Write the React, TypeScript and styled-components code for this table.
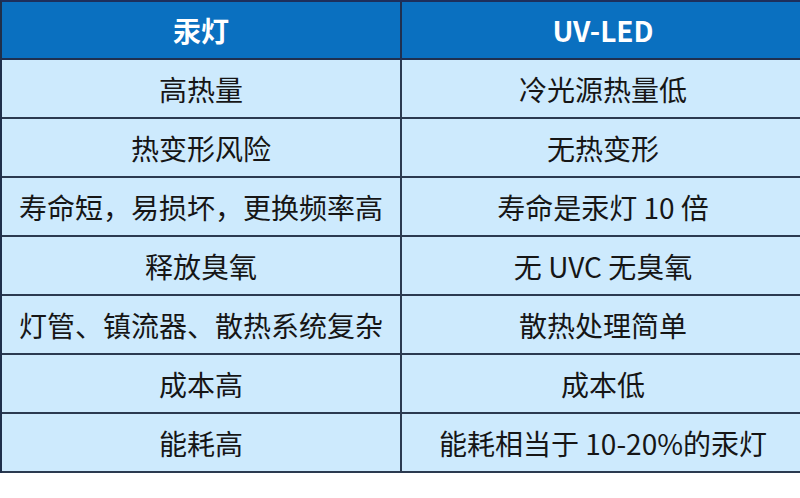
import { Fragment } from 'react';
import { createGlobalStyle, styled } from 'styled-components';

const rows = [
  ['高热量', '冷光源热量低'],
  ['热变形风险', '无热变形'],
  ['寿命短，易损坏，更换频率高', '寿命是汞灯 10 倍'],
  ['释放臭氧', '无 UVC 无臭氧'],
  ['灯管、镇流器、散热系统复杂', '散热处理简单'],
  ['成本高', '成本低'],
  ['能耗高', '能耗相当于 10-20%的汞灯'],
];

export default function App() {
  return (
    <>
      <GlobalStyle />
      <Page>
        <Table>
          <HeadCell $first>汞灯</HeadCell>
          <HeadCell>UV-LED</HeadCell>
          {rows.map(([left, right]) => (
            <Fragment key={left}>
              <Cell $first>{left}</Cell>
              <Cell>{right}</Cell>
            </Fragment>
          ))}
        </Table>
      </Page>
    </>
  );
}

const GlobalStyle = createGlobalStyle`
  html, body {
    margin: 0;
    padding: 0;
    background: #ffffff;
    overflow: hidden;
  }
`;

const Page = styled.div`
  width: 800px;
  height: 498px;
  background: #ffffff;
`;

const Table = styled.div`
  width: 802px;
  display: grid;
  grid-template-columns: 400px 402px;
  grid-template-rows: 58px repeat(7, 59px);
  border-top: 2px solid #1d2f5c;
  border-left: 2px solid #1f2f4a;
  box-sizing: border-box;
  font-family: 'Noto Sans CJK SC', 'Microsoft YaHei', sans-serif;
`;

const HeadCell = styled.div<{ $first?: boolean }>`
  display: flex;
  align-items: center;
  justify-content: center;
  background: #0a70c0;
  color: #ffffff;
  font-size: 28px;
  font-weight: 700;
  border-bottom: 2px solid #1f3050;
  border-right: ${(p) => (p.$first ? '2px solid #1f3050' : 'none')};
  box-sizing: border-box;
`;

const Cell = styled.div<{ $first?: boolean }>`
  display: flex;
  align-items: center;
  justify-content: center;
  background: #cdeafd;
  color: #161616;
  font-size: 28px;
  white-space: nowrap;
  border-bottom: 2px solid #2b3a50;
  border-right: ${(p) => (p.$first ? '2px solid #2b3a50' : 'none')};
  box-sizing: border-box;
`;
